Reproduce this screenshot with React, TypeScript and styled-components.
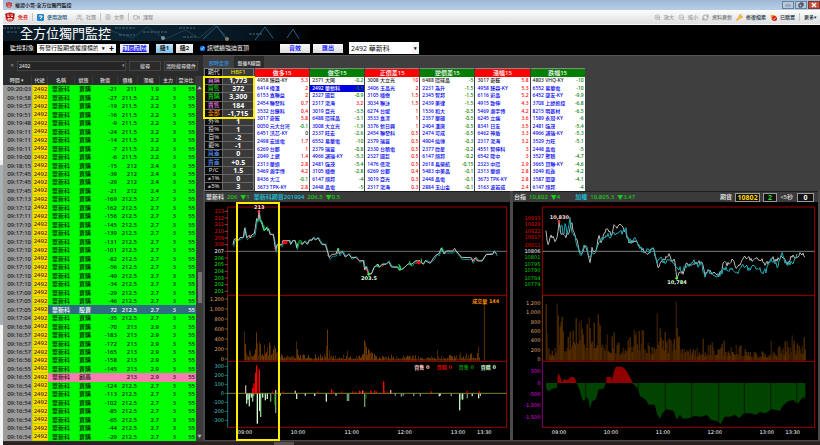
import React from 'react';
import styled, { createGlobalStyle } from 'styled-components';
import { ZoomIn, ZoomOut, RefreshCw, Wrench, Users, FileText, Video } from 'lucide-react';

const GlobalStyle = createGlobalStyle`
  * { box-sizing: border-box; }
  html, body, #root { height: 100%; }
  body {
    margin: 0;
    background: #000;
    font-family: "Noto Sans", "Noto Sans CJK TC", sans-serif;
    font-size: 6px;
    line-height: 1;
    overflow: hidden;
  }
  button, input, select { font-family: inherit; }
`;

/* ---------- shell ---------- */

const Page = styled.div`
  display: grid;
  grid-template-columns: 3px minmax(0, 1fr);
  grid-template-rows: minmax(0, 1fr);
  height: 100vh;
`;

const Edge = styled.div`
  background: linear-gradient(#fafafa 0 36%, #ececec 36% 37%, #a9b0b4 37% 73%, #f6f6f6 73%);
`;

const Win = styled.div`
  display: flex;
  flex-direction: column;
  min-width: 0;
  min-height: 0;
  background: #3f3f3f;
`;

const TitleBar = styled.header`
  flex: 0 0 10px;
  display: flex;
  align-items: center;
  gap: 3px;
  padding-left: 3px;
  font-size: 5px;
  font-weight: 500;
  color: #111;
  background: linear-gradient(#9fb9d6, #b7cee6);
`;

const WinButtons = styled.div`
  display: flex;
  align-self: stretch;
  gap: 1px;
  margin-left: auto;
  padding-top: 1px;
`;

const WinButton = styled.button<{ $close?: boolean }>`
  display: flex;
  align-items: center;
  justify-content: center;
  width: 12px;
  height: 8px;
  padding: 0;
  border: 1px solid ${(p) => (p.$close ? '#7c3a34' : '#6b8199')};
  background: ${(p) => (p.$close ? '#c8503f' : '#b5c9de')};
`;

const Toolbar = styled.nav`
  flex: 0 0 15px;
  display: flex;
  align-items: center;
  gap: 4px;
  padding: 0 3px 0 2px;
  background: linear-gradient(#fdfdfd, #dedede);
  border-bottom: 1px solid #f5f5f5;
`;

const Tool = styled.button<{ $color?: string }>`
  display: flex;
  align-items: center;
  gap: 3px;
  padding: 0;
  border: 0;
  background: none;
  font-size: 5px;
  font-weight: 500;
  line-height: 8px;
  white-space: nowrap;
  color: ${(p) => p.$color || '#999'};
`;

const Rule = styled.span<{ $clear?: boolean }>`
  width: 1px;
  height: 8px;
  background: ${(p) => (p.$clear ? 'transparent' : '#c4c4c4')};
`;

const Spacer = styled.span`
  flex: 1;
`;

const Banner = styled.div`
  position: relative;
  flex: 0 0 16px;
  overflow: hidden;
  background: #000;
`;

const BannerArt = styled.svg`
  position: absolute;
  inset: 0 auto auto 0;
  width: 310px;
  height: 16px;
`;

const BannerTitle = styled.h1`
  position: relative;
  margin: 0;
  padding: 1px 0 0 17px;
  font-size: 13px;
  line-height: 14px;
  font-weight: 400;
  color: #fff;
`;

const Controls = styled.div`
  flex: 0 0 14px;
  display: flex;
  align-items: center;
  padding: 0 0 0 7px;
  color: #fff;
  background: #000;
`;

const Label = styled.label<{ $ml?: number }>`
  display: flex;
  align-items: center;
  gap: 2px;
  margin-left: ${(p) => p.$ml || 0}px;
  font-size: 6px;
  white-space: nowrap;
`;

const ComboSelect = styled.select<{ $w: number; $big?: boolean; $ml: number }>`
  appearance: none;
  width: ${(p) => p.$w}px;
  height: ${(p) => (p.$big ? 12 : 9)}px;
  margin-left: ${(p) => p.$ml}px;
  padding: 0 2px;
  border: 0;
  border-radius: 0;
  font-size: ${(p) => (p.$big ? 7 : 6)}px;
  line-height: 1;
  color: #111;
  background: #fff;
`;

const Arrow = styled.span<{ $plus?: boolean }>`
  display: flex;
  align-items: center;
  justify-content: space-around;
  width: ${(p) => (p.$plus ? 16 : 7)}px;
  height: ${(p) => (p.$plus ? 9 : 12)}px;
  font-size: 5px;
  font-weight: 700;
  color: #111;
  background: #f4f4f4;
`;

const Push = styled.button<{ $w: number; $ml: number; $on?: boolean; $link?: boolean; $dark?: boolean }>`
  width: ${(p) => p.$w}px;
  height: 9px;
  margin-left: ${(p) => p.$ml}px;
  padding: 0;
  border: 0;
  font-size: 6px;
  line-height: 9px;
  font-weight: 700;
  white-space: nowrap;
  color: ${(p) => (p.$dark ? '#222' : '#1a1aff')};
  text-decoration: ${(p) => (p.$link ? 'underline' : 'none')};
  background: ${(p) => (p.$on ? 'linear-gradient(#c4e6fb, #7cc3ee)' : 'linear-gradient(#fafafa, #dcdcdc)')};
`;

const Check = styled.input`
  width: 5px;
  height: 5px;
  margin: 0;
`;

const Main = styled.main`
  flex: 1;
  min-height: 0;
  display: grid;
  grid-template-columns: 200fr 617fr;
  grid-template-rows: minmax(0, 1fr);
`;

const BottomStrip = styled.footer`
  flex: 0 0 4px;
  display: flex;
  background: #2a2120;
  border-top: 1px solid #3b302d;
`;

const StripThumb = styled.span`
  width: 20px;
  margin-left: 271px;
  background: #5b5552;
`;

/* ---------- signal list ---------- */

const ListPane = styled.section`
  display: flex;
  flex-direction: column;
  min-height: 0;
  background: #2b2b2b;
`;

const FilterBar = styled.form`
  flex: 0 0 21px;
  display: flex;
  align-items: center;
  gap: 3px;
  padding: 0 5px 0 7px;
  font-size: 5px;
  color: #999;
`;

const FilterBox = styled.div`
  flex: 1;
  min-width: 0;
  display: flex;
  align-items: center;
  border: 1px solid #444;
  height: 10px;
  background: #252525;
`;

const FilterInput = styled.input`
  flex: 1;
  min-width: 0;
  padding: 0 1px;
  border: 0;
  font-size: 5px;
  color: #eee;
  background: none;
`;

const DarkButton = styled.button<{ $w: number }>`
  flex: 0 0 ${(p) => p.$w}px;
  height: 10px;
  padding: 0;
  border: 1px solid #454545;
  font-size: 5px;
  line-height: 8px;
  white-space: nowrap;
  color: #eee;
  background: #2b2b2b;
`;

const ListBody = styled.div`
  flex: 1;
  min-height: 0;
  display: grid;
  grid-template-columns: minmax(0, 1fr) 7px;
  grid-template-rows: minmax(0, 1fr);
`;

const SignalTable = styled.table`
  display: flex;
  flex-direction: column;
  min-height: 0;
`;

const COLS = '29fr 16fr 27fr 18fr 25fr 20fr 22fr 17fr 19fr';

const SignalHead = styled.thead`
  flex: 0 0 9px;
  display: grid;

  tr { display: grid; grid-template-columns: ${COLS}; }
  th {
    padding: 0;
    font-size: 5px;
    line-height: 9px;
    font-weight: 500;
    white-space: nowrap;
    color: #d8d8d8;
    border-right: 1px solid #3a3a3a;
  }
`;

const SignalBody = styled.tbody`
  flex: 1;
  min-height: 0;
  display: grid;
  grid-auto-rows: minmax(0, 1fr);
`;

const TONES: Record<string, [string, string]> = {
  sell: ['#00ff00', '#001800'],
  hold: ['#2d6e80', '#fff'],
  high: ['#f77fb0', '#3a0a1c'],
};

const SignalRow = styled.tr<{ $tone: string }>`
  display: grid;
  grid-template-columns: ${COLS};
  grid-template-rows: minmax(0, 1fr);
  font-weight: 500;
  color: ${(p) => TONES[p.$tone][1]};
  background: ${(p) => TONES[p.$tone][0]};
`;

const Cell = styled.td<{ $kind: 'time' | 'code' | 'name' | 'num' }>`
  display: flex;
  align-items: center;
  min-height: 0;
  white-space: nowrap;
  line-height: 8px;
  padding: ${(p) => ({ time: '0 1px 0 0', code: '0', name: '0 0 0 4px', num: '0 1px 0 0' })[p.$kind]};
  justify-content: ${(p) => ({ time: 'flex-end', code: 'center', name: 'flex-start', num: 'flex-end' })[p.$kind]};
  ${(p) => p.$kind === 'time' && 'background: #9b9b9b; color: #1a1a1a;'}
  ${(p) => p.$kind === 'code' && 'background: #ffd800; color: #3b3000; border: solid #b8d800; border-width: 0 0 1px 1px;'}
`;

const ScrollTrack = styled.div`
  display: flex;
  flex-direction: column;
  align-items: center;
  padding: 11px 0 2px;
  font-size: 4px;
  color: #bbb;
  background: #3b3b3b;
`;

const ScrollGap = styled.span<{ $grow: number }>`
  flex: ${(p) => p.$grow};
`;

const ScrollThumb = styled.span`
  width: 4px;
  height: 31px;
  background: #707070;
`;

/* ---------- market tables ---------- */

const RightPane = styled.section`
  display: flex;
  flex-direction: column;
  min-width: 0;
  min-height: 0;
  border-top: 1px solid #555;
  background: #3f3f3f;
`;

const Tabs = styled.div`
  flex: 0 0 12px;
  display: flex;
  align-items: stretch;
  padding-left: 1px;
`;

const Tab = styled.button<{ $active?: boolean }>`
  width: 30px;
  padding: 0;
  border: 0;
  font-size: 5px;
  font-weight: 500;
  white-space: nowrap;
  color: ${(p) => (p.$active ? '#2f8fe0' : '#ddd')};
  background: ${(p) => (p.$active ? '#3f3f3f' : '#2b2b2b')};
`;

const Market = styled.div`
  position: relative;
  flex: 0 0 123px;
  display: grid;
  grid-template-columns: 50fr repeat(6, 54fr) 234fr;
  grid-template-rows: minmax(0, 1fr);
  column-gap: 1px;
  padding-left: 1px;
`;

const Summary = styled.table`
  display: grid;
  grid-template-rows: minmax(0, 1fr);
  min-height: 0;
  border: 1px solid #777;
  background: #666;
`;

const SummaryBody = styled.tbody`
  display: grid;
  min-height: 0;
  grid-auto-rows: minmax(0, 1fr);
  row-gap: 1px;
`;

const SummaryRow = styled.tr`
  display: grid;
  grid-template-columns: 18fr 31fr;
  grid-template-rows: minmax(0, 1fr);
  column-gap: 1px;
`;

const SummaryKey = styled.th<{ $c: string }>`
  display: flex;
  align-items: center;
  justify-content: center;
  min-height: 0;
  padding: 0;
  font-size: 6px;
  font-weight: 400;
  line-height: 7px;
  white-space: nowrap;
  color: ${(p) => p.$c};
  background: #0b0b0b;
`;

const SummaryValue = styled.td<{ $head?: boolean }>`
  display: flex;
  align-items: center;
  justify-content: center;
  min-height: 0;
  padding: 0;
  font-size: ${(p) => (p.$head ? 6 : 7)}px;
  font-weight: ${(p) => (p.$head ? 400 : 700)};
  line-height: 7px;
  color: ${(p) => (p.$head ? '#f1e500' : '#fff')};
  background: #3a3a3a;
`;

const SummaryMark = styled.span`
  position: absolute;
  top: 8px;
  left: 0;
  width: 52px;
  height: 43px;
  border: 2px solid #ffee00;
`;

const RankTable = styled.table`
  display: flex;
  flex-direction: column;
  min-height: 0;
  background: #fff;
`;

const RankHead = styled.caption<{ $c: string }>`
  flex: 0 0 9px;
  border-top: 1px solid #888;
  font-size: 6px;
  line-height: 8px;
  font-weight: 500;
  text-align: center;
  color: #fff;
  background: ${(p) => p.$c};
`;

const RankBody = styled.tbody`
  flex: 1;
  min-height: 0;
  display: grid;
  grid-auto-rows: minmax(0, 1fr);
`;

const RankRow = styled.tr<{ $first?: boolean; $selected?: boolean }>`
  display: flex;
  align-items: center;
  justify-content: space-between;
  padding: 0 1px 0 2px;
  color: ${(p) => (p.$selected ? '#fff' : p.$first ? '#222' : '#0000f0')};
  background: ${(p) => (p.$selected ? '#0000e0' : 'transparent')};
`;

const RankCell = styled.td<{ $c?: string }>`
  padding: 0;
  font-size: 5px;
  line-height: 7px;
  font-weight: 500;
  white-space: nowrap;
  color: ${(p) => p.$c || 'inherit'};
`;

/* ---------- charts ---------- */

const Charts = styled.div`
  position: relative;
  flex: 1;
  min-height: 0;
  display: grid;
  grid-template-columns: minmax(0, 1fr) minmax(0, 1fr);
  grid-template-rows: minmax(0, 1fr);
  column-gap: 3px;
  padding: 0 2px 1px;
  background: #4a4a4a;
`;

const Panel = styled.article`
  display: flex;
  flex-direction: column;
  min-width: 0;
  min-height: 0;
  border-top: 1px solid #1e1e1e;
  background: #3a3a3a;
`;

const PanelHead = styled.div`
  flex: 0 0 10px;
  display: flex;
  align-items: center;
  gap: 3px;
  padding: 0 4px 0 1px;
  font-weight: 500;
  white-space: nowrap;
`;

const Quote = styled.span<{ $c: string; $gap?: number }>`
  margin-right: ${(p) => p.$gap || 0}px;
  color: ${(p) => p.$c};
`;

const Box = styled.span<{ $c: string; $w: number }>`
  width: ${(p) => p.$w}px;
  height: 9px;
  border: 1px solid #999;
  font-size: 7px;
  line-height: 7px;
  font-weight: 700;
  text-align: center;
  color: ${(p) => p.$c};
  background: #111;
`;

const Plot = styled.svg`
  flex: 1;
  min-height: 0;
  width: 100%;
  background: #000;
  font-family: "DejaVu Sans", "Noto Sans CJK TC", sans-serif;
`;

const ChartMark = styled.span`
  position: absolute;
  top: 11px;
  bottom: 0;
  left: 33px;
  width: 44px;
  border: 2px solid #ffee00;
`;

/* ---------- data ---------- */

type Signal = [string, string, string, string, string, string?];

const SIGNALS: Signal[] = [
  ['09:20:03', '賣購', '-21', '211', '1.9'],
  ['09:19:58', '賣購', '-27', '211.5', '2.2'],
  ['09:19:57', '賣購', '-19', '211.5', '2.2'],
  ['09:19:51', '賣購', '-16', '211.5', '2.2'],
  ['09:19:48', '賣購', '-9', '211.5', '2.2'],
  ['09:19:11', '賣購', '-24', '211.5', '2.2'],
  ['09:19:11', '賣購', '-14', '211.5', '2.2'],
  ['09:19:11', '賣購', '-7', '211.5', '2.2'],
  ['09:19:00', '賣購', '-6', '211.5', '2.2'],
  ['09:18:15', '賣購', '-15', '212', '2.4'],
  ['09:17:45', '賣購', '-39', '212', '2.4'],
  ['09:17:45', '賣購', '-29', '212', '2.4'],
  ['09:17:45', '賣購', '-21', '212', '2.4'],
  ['09:17:13', '賣購', '-169', '212.5', '2.7'],
  ['09:17:12', '賣購', '-162', '212.5', '2.7'],
  ['09:17:11', '賣購', '-156', '212.5', '2.7'],
  ['09:17:10', '賣購', '-145', '212.5', '2.7'],
  ['09:17:10', '賣購', '-139', '212.5', '2.7'],
  ['09:17:10', '賣購', '-131', '212.5', '2.7'],
  ['09:17:10', '賣購', '-101', '212.5', '2.7'],
  ['09:17:10', '賣購', '-82', '212.5', '2.7'],
  ['09:17:10', '賣購', '-56', '212.5', '2.7'],
  ['09:17:10', '賣購', '-49', '212.5', '2.7'],
  ['09:17:10', '賣購', '-34', '212.5', '2.7'],
  ['09:17:09', '賣購', '-29', '212.5', '2.7'],
  ['09:17:05', '賣購', '-46', '212.5', '2.7'],
  ['09:17:05', '股賣', '72', '212.5', '2.7', 'hold'],
  ['09:17:04', '賣購', '-35', '212.5', '2.7'],
  ['09:16:59', '賣購', '-70', '213', '2.9'],
  ['09:16:57', '賣購', '-183', '213', '2.9'],
  ['09:16:57', '賣購', '-172', '213', '2.9'],
  ['09:16:57', '賣購', '-165', '213', '2.9'],
  ['09:16:56', '賣購', '-158', '213', '2.9'],
  ['09:16:55', '賣購', '-145', '213', '2.9'],
  ['09:16:55', '創高', '', '213', '2.9', 'high'],
  ['09:16:54', '賣購', '-124', '212.5', '2.7'],
  ['09:16:54', '賣購', '-113', '212.5', '2.7'],
  ['09:16:54', '賣購', '-102', '212.5', '2.7'],
  ['09:16:54', '賣購', '-85', '212.5', '2.7'],
  ['09:16:54', '賣購', '-65', '212.5', '2.7'],
  ['09:16:54', '賣購', '-44', '212.5', '2.7'],
  ['09:16:54', '賣購', '-29', '212.5', '2.7'],
];

const SUMMARY: [string, string, string][] = [
  ['買購', '1,773', '#ff8cff'],
  ['買售', '372', '#18e018'],
  ['賣購', '3,300', '#18e018'],
  ['賣售', '184', '#ff8cff'],
  ['全部', '-1,715', '#ff9000'],
  ['外%', '1', '#ddd'],
  ['投%', '1', '#ddd'],
  ['自%', '-2', '#ddd'],
  ['避%', '-1', '#ddd'],
  ['買差', '0', '#5a9cff'],
  ['賣差', '+0.5', '#5a9cff'],
  ['P/C', '1.5', '#ddd'],
  ['±1%', '0', '#ddd'],
  ['±5%', '3', '#ddd'],
];

const RED = '#ff0000';
const GREEN = '#007f00';

const RANKS: { title: string; color: string; rows: string }[] = [
  { title: '做多15', color: RED, rows: '4958 臻鼎-KY|5.3,6414 樺漢|2,6153 嘉聯益|2,2454 聯發科|0.7,3532 台勝科|0.4,3017 奇鋐|5.8,0050 元大台灣|-0.1,6451 訊芯-KY|0,2498 宏達電|1.7,6269 台郡|1,2049 上銀|1.4,2313 華通|2.8,5469 瀚宇博|4.2,8436 大江|-0.1,3673 TPK-KY|2.8' },
  { title: '做空15', color: GREEN, rows: '2371 大同|-0.2,2492 華新科|-0.5,2327 國巨|-0.9,2317 鴻海|3.2,3019 亞光|-3.5,6488 環球晶|-3.1,3008 大立光|-1.9,2337 旺宏|-2.6,6552 易華電|-10,2379 瑞昱|-0.8,4966 譜瑞-KY|-5.3,2481 強茂|-5.4,3105 穩懋|-2.8,6147 頎邦|-4,2448 晶電|-5' },
  { title: '正價差15', color: RED, rows: '3008 大立光|10,3406 玉晶光|2,3105 穩懋|1.5,3034 聯詠|1.5,6274 台燿|1,3533 嘉澤|1,3376 新日興|1,2454 聯發科|0.5,2379 瑞昱|0.5,2330 台積電|0.5,2327 國巨|0.5,1476 儒鴻|0.5,6269 台郡|0.4,3019 亞光|0.3,2317 鴻海|0.3' },
  { title: '逆價差15', color: GREEN, rows: '6488 環球晶|-5,2231 為升|-1.5,2345 智邦|-1.5,2439 美律|-1.5,1536 和大|-0.5,2357 華碩|-0.5,2404 漢唐|-0.5,2474 可成|-0.5,4904 遠傳|-0.3,2377 微星|-0.2,6147 頎邦|-0.2,2618 長榮航|-0.15,5483 中美晶|-0.1,2448 晶電|-0.1,2884 玉山金|-0.1' },
  { title: '漲幅15', color: RED, rows: '3017 奇鋐|5.8,4958 臻鼎-KY|5.3,6116 彩晶|5.2,4915 致伸|4.3,5469 瀚宇博|4.2,6245 立端|3.6,8341 日友|3.5,6462 神盾|3.3,2317 鴻海|3.2,4551 智伸科|3,6542 隆中|3,2323 中環|2.9,2313 華通|2.8,3673 TPK-KY|2.8,3163 波若威|2.4' },
  { title: '跌幅15', color: GREEN, rows: '4803 VHQ-KY|-10,6552 易華電|-10,6452 康友-KY|-9.9,3708 上緯投控|-6.8,8215 明基材|-6.5,1589 永冠-KY|-6,2481 強茂|-5.4,4966 譜瑞-KY|-5.3,3529 力旺|-5.1,2448 晶電|-5,3527 聚積|-4.7,3665 貿聯-KY|-4.6,3049 和鑫|-4.2,3587 閎康|-4.1,6147 頎邦|-4' },
];

/* ---------- chart geometry ---------- */

const noise = (i: number) => {
  const v = Math.sin(i * 127.1 + 11.7) * 43758.5453;
  return v - Math.floor(v);
};

type Pt = [number, number];

const lerp = (pts: Pt[], x: number) => {
  for (let i = 1; i < pts.length; i++) {
    if (x <= pts[i][0]) {
      const [x0, y0] = pts[i - 1];
      const [x1, y1] = pts[i];
      return y0 + ((y1 - y0) * (x - x0)) / (x1 - x0 || 1);
    }
  }
  return pts[pts.length - 1][1];
};

const toPoints = (pts: Pt[]) => pts.map((p) => p.join(',')).join(' ');

const jitter = (pts: Pt[], step: number, amp: number, seed: number): Pt[] => {
  const out: Pt[] = [];
  const end = pts[pts.length - 1][0];
  for (let x = pts[0][0]; x <= end; x += step) out.push([x, Math.round(lerp(pts, x) + (noise(x + seed) - 0.5) * amp)]);
  return out;
};

const bars = (env: Pt[], spikes: Pt[], base: number, step: number, seed: number) => {
  const out: { x: number; h: number; light: boolean }[] = [];
  const end = env[env.length - 1][0];
  for (let x = env[0][0]; x <= end; x += step) {
    const n = noise(x + seed);
    let h = lerp(env, x) * (0.5 + n * n * 1.3);
    spikes.forEach(([sx, sy]) => {
      if (Math.abs(sx - x) <= step / 2) h = base - sy;
    });
    out.push({ x, h: Math.round(h), light: noise(x * 3 + seed) > 0.45 });
  }
  return out;
};

const PRICE: Pt[] = [[93, 170], [97, 153], [104, 153], [108, 158], [114, 149], [124, 148], [128, 120], [134, 149], [142, 142], [144, 150], [150, 140], [157, 137], [160, 118], [164, 92], [168, 96], [171, 70], [174, 96], [180, 108], [184, 122], [188, 127], [194, 118], [197, 128], [200, 122], [204, 139], [214, 139], [218, 168], [221, 187], [225, 170], [240, 170], [242, 158], [262, 158], [266, 169], [272, 158], [280, 158], [284, 179], [290, 160], [296, 160], [300, 170], [308, 160], [316, 169], [322, 156], [330, 157], [334, 149], [340, 156], [348, 150], [354, 160], [360, 170], [370, 170], [376, 189], [382, 208], [390, 199], [402, 198], [408, 182], [412, 198], [420, 190], [430, 207], [440, 199], [448, 208], [462, 208], [472, 218], [484, 218], [488, 246], [492, 236], [500, 259], [508, 258], [516, 238], [528, 228], [532, 238], [540, 229], [552, 229], [560, 221], [568, 237], [586, 238], [592, 247], [600, 244], [608, 238], [618, 228], [630, 228], [640, 219], [654, 218], [664, 229], [670, 218], [684, 226], [696, 208], [704, 200], [710, 198], [718, 180], [726, 198], [732, 189], [752, 189], [758, 181], [762, 189], [772, 199], [778, 208], [808, 209], [812, 220], [820, 209], [828, 219], [840, 219], [852, 200], [872, 199], [876, 190], [884, 198]];
const PRICE_ALT: Pt[] = PRICE.map(([x, y], i) => [x + 2, y + (noise(i) > 0.6 ? 6 : -2)] as Pt);

const LEFT_VOL = bars(
  [[127, 60], [140, 18], [160, 30], [180, 28], [230, 24], [240, 14], [300, 12], [480, 9], [490, 28], [520, 11], [700, 9], [760, 10], [833, 14]],
  [[127, 432], [130, 470], [163, 435], [166, 468], [172, 462], [196, 480], [202, 465], [217, 475], [283, 462], [286, 486], [376, 427], [373, 476], [382, 488], [436, 490], [487, 459], [490, 465], [493, 478], [706, 488], [775, 495], [829, 477], [826, 497]],
  520, 3, 5,
);

const RIGHT_VOL = bars(
  [[108, 50], [120, 20], [140, 36], [145, 90], [160, 50], [200, 75], [240, 75], [270, 60], [300, 45], [330, 32], [390, 60], [430, 30], [442, 90], [470, 45], [505, 55], [530, 25], [580, 22], [610, 34], [650, 26], [690, 30], [730, 18], [790, 18], [830, 34], [886, 42]],
  [[108, 351], [111, 440], [141, 348], [144, 384], [156, 388], [207, 405], [213, 398], [237, 390], [264, 381], [267, 408], [312, 435], [441, 378], [450, 423], [498, 342], [501, 422], [579, 454], [606, 466], [642, 460], [690, 476], [783, 460], [825, 462], [846, 444], [882, 450]],
  520, 3, 40,
);

const FLOW: [number, number, string][] = [
  [131, -24, '#c9a0a0'], [134, 30, '#bfeebf'], [138, 18, '#bfeebf'], [142, 38, '#bfeebf'], [148, 12, '#bfeebf'], [152, -16, '#f00'], [156, -30, '#f00'], [152, 24, '#8fc98f'],
  [161, -62, '#f00'], [164, -84, '#f00'], [166, 90, '#d8ffd8'], [172, -72, '#f00'], [173, 52, '#d8ffd8'], [176, 70, '#8fc98f'], [182, 12, '#bfeebf'], [190, 20, '#bfeebf'], [196, 16, '#bfeebf'],
  [206, 24, '#6a9a6a'], [218, 34, '#007000'], [221, 58, '#6a9a6a'], [221, -10, '#e6a0a0'], [284, 16, '#bfeebf'], [280, -8, '#e6a0a0'], [310, 6, '#bfeebf'], [338, 7, '#bfeebf'], [373, 24, '#bfeebf'],
  [389, -12, '#f00'], [402, 6, '#bfeebf'], [436, 22, '#6a9a6a'], [440, 22, '#6a9a6a'], [488, 40, '#6a9a6a'], [492, 16, '#007000'], [472, -8, '#f00'], [482, -8, '#e6a0a0'], [506, -8, '#f00'], [518, -8, '#f00'],
  [545, -36, '#f00'], [566, -10, '#e6a0a0'], [598, 9, '#6a9a6a'], [655, 8, '#6a9a6a'], [688, -6, '#f00'], [712, 8, '#bfeebf'], [773, 50, '#bfeebf'], [777, 18, '#6a9a6a'], [782, 18, '#bfeebf'], [796, 14, '#6a9a6a'], [796, -8, '#b00'], [810, 8, '#6a9a6a'], [830, 14, '#bfeebf'], [832, -6, '#f00'],
];

const FUTURES: Pt[] = [[108, 128], [113, 166], [119, 158], [124, 142], [130, 148], [134, 166], [140, 160], [147, 100], [153, 143], [162, 138], [168, 145], [175, 132], [181, 124], [184, 100], [190, 128], [197, 146], [205, 168], [211, 200], [218, 190], [224, 168], [231, 184], [239, 228], [246, 184], [252, 196], [260, 180], [266, 140], [273, 162], [280, 146], [290, 118], [297, 128], [304, 142], [311, 112], [320, 118], [328, 110], [338, 120], [346, 132], [354, 156], [362, 164], [372, 156], [384, 170], [398, 184], [408, 200], [418, 196], [426, 178], [434, 196], [444, 238], [452, 224], [462, 216], [470, 204], [478, 196], [486, 216], [494, 212], [500, 270], [508, 248], [518, 256], [528, 230], [538, 232], [550, 226], [562, 226], [576, 220], [584, 262], [594, 250], [606, 254], [616, 252], [626, 262], [636, 240], [642, 218], [650, 230], [660, 226], [668, 216], [678, 240], [690, 228], [700, 210], [712, 208], [720, 212], [728, 220], [742, 208], [756, 216], [766, 228], [778, 222], [786, 210], [800, 218], [812, 204], [820, 212], [832, 224], [846, 206], [858, 208], [870, 200], [878, 196], [885, 204]];
const SPOT: Pt[] = [[150, 134], [155, 100], [160, 146], [167, 100], [172, 140], [181, 90], [186, 134], [193, 138], [200, 164], [207, 190], [214, 200], [222, 168], [230, 180], [240, 214], [248, 196], [258, 192], [266, 160], [276, 154], [290, 140], [300, 144], [312, 134], [324, 140], [336, 132], [348, 126], [356, 156], [368, 160], [378, 152], [390, 176], [402, 198], [412, 184], [424, 190], [430, 176], [440, 220], [452, 214], [464, 222], [478, 208], [490, 224], [502, 236], [514, 246], [526, 240], [538, 230], [550, 218], [562, 232], [574, 226], [584, 270], [596, 248], [608, 256], [620, 262], [632, 256], [644, 240], [656, 250], [668, 246], [682, 254], [694, 236], [706, 232], [718, 246], [730, 234], [744, 236], [756, 252], [768, 248], [778, 220], [790, 216], [802, 234], [816, 200], [826, 220], [838, 230], [850, 222], [862, 194]];
const RED_AREA_A: Pt[] = [[142, 585], [142, 572], [145, 556], [150, 564], [156, 582], [162, 574], [174, 576], [184, 566], [194, 568], [200, 585]];
const RED_AREA_B: Pt[] = [[288, 585], [290, 566], [304, 568], [306, 578], [312, 550], [318, 536], [336, 536], [346, 544], [356, 560], [366, 580], [370, 585]];
const GREEN_AREA: Pt[] = [[108, 585], [108, 600], [115, 610], [126, 604], [132, 600], [141, 600], [142, 585], [200, 585], [208, 602], [216, 632], [222, 640], [228, 626], [236, 636], [240, 662], [246, 640], [258, 634], [266, 604], [280, 602], [288, 586], [366, 585], [376, 594], [384, 602], [390, 624], [408, 636], [416, 650], [434, 650], [442, 680], [450, 692], [456, 678], [468, 664], [490, 668], [500, 694], [510, 680], [518, 692], [540, 690], [552, 684], [576, 686], [590, 680], [604, 696], [624, 700], [632, 708], [644, 686], [660, 686], [674, 680], [688, 690], [702, 676], [720, 676], [738, 680], [750, 672], [768, 676], [784, 664], [810, 668], [820, 652], [834, 640], [850, 636], [862, 648], [876, 630], [884, 628], [886, 640], [886, 585]];

const AXIS_TIMES = ['09:00', '10:00', '11:00', '12:00', '13:00', '13:30'];

const TickLabels = ({ items, right }: { items: [string, number, string][]; right: number }) => (
  <g fontSize="15" textAnchor="end">
    {items.map(([t, y, c]) => (
      <text key={t + y} x={right} y={y + 5} fill={c}>
        {t}
      </text>
    ))}
  </g>
);

const Frame = ({ left }: { left: number }) => (
  <g stroke="#a00000" strokeWidth="3" fill="none">
    <path d={`M${left} 57H914V718H${left}M${left} 322H914M${left} 520H914M${left} 57V322`} />
    <path d={`M${left} 322V520`} stroke="#7a4000" />
  </g>
);

const StockChart = () => (
  <Plot viewBox="9 45 915 708" role="img" aria-label="華新科 走勢圖">
    <Frame left={77} />
    <path d="M77 520V718" stroke="#008080" strokeWidth="3" />
    <TickLabels
      right={66}
      items={[
        ...[213, 212, 211, 210, 209, 208].map((v, i) => [String(v), 70 + i * 20, '#f00000'] as [string, number, string]),
        ['207', 190, '#fff'],
        ...[206, 205, 204, 203, 202, 201].map((v, i) => [String(v), 210 + i * 20, '#00e800'] as [string, number, string]),
        ...['1,200', '1,000', '800', '600', '400', '200', '0'].map((v, i) => [v, 333 + i * 30, '#e0a870'] as [string, number, string]),
        ...['300', '200', '100', '0', '-100', '-200', '-300'].map((v, i) => [v, 535 + i * 27, '#50c0c0'] as [string, number, string]),
      ]}
    />
    <path d={Array.from({ length: 13 }, (_, i) => `M68 ${70 + i * 20}H77`).join('') + Array.from({ length: 7 }, (_, i) => `M68 ${333 + i * 30}H77M68 ${535 + i * 27}H77`).join('')} stroke="#888" strokeWidth="2" />
    <path d="M77 190H914" stroke="#707070" strokeWidth="3" />
    <polyline points={toPoints(PRICE_ALT)} fill="none" stroke="#008c8c" strokeWidth="3" />
    <polyline points={toPoints(PRICE)} fill="none" stroke="#c0c0c0" strokeWidth="3" />
    <g strokeWidth="3" fill="none">
      <path d="M142 150l3-9M171 70v12M219 180l3 8M376 200l6 8M408 186v10M466 210l8 10M492 240l8 18M540 236l6-6M640 226l14-4M810 212l6 8M820 212l6 8" stroke="#ff5050" />
      <path d="M164 92l4 8M178 98l4 12M186 112v16M194 120l4 10M284 168l4 8M408 180v8M524 230l6 8M590 228l8 18M594 246v-14M622 220l6 14M658 212v10M718 182l4 10" stroke="#00ff40" />
    </g>
    <path d="M242 158h14v10h-14zM646 220h10v9h-10z" fill="#f00" />
    <path d="M288 158h10v10h-10z" fill="#007000" />
    <circle cx="171" cy="70" r="4" fill="#ff4040" />
    <circle cx="500" cy="259" r="4" fill="#40ff40" />
    <g fontSize="15" fontWeight="700" textAnchor="middle">
      <text x="172" y="62" fill="#ffd8d8">213</text>
      <text x="501" y="277" fill="#d8ffd8">203.5</text>
    </g>
    {LEFT_VOL.map((b) => (
      <rect key={b.x} x={b.x - 1} y={518 - b.h} width="3" height={b.h} fill={b.light ? '#6b3600' : '#4a2500'} />
    ))}
    <path d="M847 341V518" stroke="#5c2f00" strokeWidth="3" />
    <text x="892" y="345" fontSize="15" fontWeight="700" textAnchor="end" fill="#ff8c00">成交量 144</text>
    <path d="M77 616H914" stroke="#808030" strokeWidth="3" />
    {FLOW.map(([x, h, c], i) => (
      <rect key={i} x={x - 2} y={h < 0 ? 616 + h : 617} width="4" height={Math.abs(h)} fill={c} />
    ))}
    {Array.from({ length: 90 }, (_, i) => 130 + i * 8).map((x) => {
      const n = noise(x);
      return n > 0.5 && (x < 260 || n > 0.8) ? (
        <rect key={x} x={x} y={n > 0.75 && x < 560 ? 610 : 617} width="3" height={3 + Math.round(n * 4)} fill={n > 0.75 && x < 560 ? '#e00000' : '#9fd89f'} />
      ) : null;
    })}
    <g fontSize="15" fontWeight="700">
      <text x="637" y="543" fill="#ffc8c8">賣售 0</text>
      <text x="704" y="543" fill="#d80000">買購 0</text>
      <text x="770" y="543" fill="#008a00">買售 0</text>
      <text x="836" y="543" fill="#d0ffd0">賣購 0</text>
    </g>
    <g fontSize="15" textAnchor="middle" fill="#fff">
      {AXIS_TIMES.map((t, i) => (
        <text key={t} x={[129, 288, 449, 608, 768, 847][i]} y="737">{t}</text>
      ))}
    </g>
  </Plot>
);

const IndexChart = () => (
  <Plot viewBox="9 45 915 708" role="img" aria-label="台指 走勢圖">
    <Frame left={97} />
    <path d="M97 520V718" stroke="#800080" strokeWidth="3" />
    <TickLabels
      right={91}
      items={[
        ['10833', 90, '#e00000'], ['10828', 108, '#e00000'], ['10822', 131, '#e00000'], ['10817', 149, '#e00000'], ['10811', 171, '#e00000'],
        ['10806', 190, '#fff'],
        ['10801', 208, '#00d800'], ['10795', 230, '#00d800'], ['10790', 248, '#00d800'], ['10784', 270, '#00d800'], ['10779', 288, '#00d800'],
        ...['1,200', '1,000', '800', '600', '400', '200', '0'].map((v, i) => [v, 346 + i * 28, '#e0a870'] as [string, number, string]),
        ...['500', '0', '-500', '-1,000', '-1,500'].map((v, i) => [v, 551 + i * 34, '#e000e0'] as [string, number, string]),
      ]}
    />
    <path d="M97 190H914" stroke="#808080" strokeWidth="3" />
    <polyline points={toPoints(jitter(FUTURES, 3, 12, 3))} fill="none" stroke="#b8b8b8" strokeWidth="3" />
    <polyline points={toPoints(jitter(SPOT, 3, 16, 9))} fill="none" stroke="#20a8b0" strokeWidth="3" />
    <circle cx="147" cy="100" r="4" fill="#ff3030" />
    <circle cx="500" cy="271" r="4" fill="#40ff40" />
    <g fontSize="15" fontWeight="700" textAnchor="middle">
      <text x="148" y="92" fill="#ffd8d8">10,830</text>
      <text x="501" y="288" fill="#d8ffd8">10,784</text>
    </g>
    {RIGHT_VOL.map((b) => (
      <rect key={b.x} x={b.x - 1} y={518 - b.h} width="3" height={b.h} fill={b.light ? '#6b3600' : '#4a2500'} />
    ))}
    <polygon points={toPoints(RED_AREA_A)} fill="#900000" />
    <polygon points={toPoints(RED_AREA_B)} fill="#900000" />
    <polygon points={toPoints(GREEN_AREA)} fill="#004400" />
    <path d="M227 585v50M385 585v20M466 585v80M545 585v102M626 585v115M703 585v90M782 585v80M860 585v60" stroke="#001c00" strokeWidth="3" />
    <g fontSize="15" textAnchor="middle" fill="#fff">
      {AXIS_TIMES.map((t, i) => (
        <text key={t} x={[147, 303, 459, 614, 770, 848][i]} y="737">{t}</text>
      ))}
    </g>
  </Plot>
);

/* ---------- page ---------- */

const PigIcon = ({ size }: { size: number }) => (
  <svg width={size} height={size} viewBox="0 0 20 20" aria-hidden="true">
    <circle cx="10" cy="10" r="9" fill="#c41414" />
    <circle cx="3" cy="5" r="2.5" fill="#a01010" />
    <circle cx="17" cy="5" r="2.5" fill="#a01010" />
    <path d="M4 6h5M11 6h5M5 9h4M12 9h4M6 13h8v3H6z" stroke="#fff" strokeWidth="1.6" fill="none" />
  </svg>
);

const InfoIcon = () => (
  <svg width="7" height="7" viewBox="0 0 14 14" aria-hidden="true">
    <rect width="14" height="14" rx="2" fill="#2588c8" />
    <path d="M4 4h6v2L7 8v2" stroke="#fff" strokeWidth="2" fill="none" />
  </svg>
);

const BoughtIcon = () => (
  <svg width="7" height="7" viewBox="0 0 14 14" aria-hidden="true">
    <path d="M1 2h9v10H3z" fill="#f3a01c" />
    <circle cx="9" cy="9" r="5" fill="#d81818" />
    <path d="M6 9l2 2 4-4" stroke="#fff" strokeWidth="1.6" fill="none" />
  </svg>
);

const changeColor = (v: string) => (v.startsWith('-') ? '#008000' : v === '0' ? '#222' : '#ff0000');

export default function App() {
  return (
    <>
      <GlobalStyle />
      <Page>
        <Edge />
        <Win>
          <TitleBar>
            <PigIcon size={6} />
            <span>權證小哥-全方位獨門監控</span>
            <WinButtons>
              <WinButton aria-label="最小化">
                <svg width="6" height="4" viewBox="0 0 6 4"><path d="M1 2h4v1H1z" fill="#fff" stroke="#445" strokeWidth=".5" /></svg>
              </WinButton>
              <WinButton aria-label="還原">
                <svg width="6" height="6" viewBox="0 0 6 6"><path d="M2 1h3v3M1 2h3v3H1z" fill="none" stroke="#334" /></svg>
              </WinButton>
              <WinButton aria-label="關閉" $close>
                <svg width="6" height="6" viewBox="0 0 6 6"><path d="M1 1l4 4M5 1L1 5" stroke="#fff" strokeWidth="1.4" /></svg>
              </WinButton>
            </WinButtons>
          </TitleBar>

          <Toolbar>
            <Tool $color="#e01010"><PigIcon size={10} />免費</Tool>
            <Rule />
            <Tool $color="#235a80"><InfoIcon />使用說明</Tool>
            <Rule $clear />
            <Tool><Users size={7} />社團</Tool>
            <Rule />
            <Tool><FileText size={6} />文章</Tool>
            <Rule />
            <Tool><Video size={7} />課程</Tool>
            <Spacer />
            <Tool><ZoomIn size={7} />放大</Tool>
            <Tool><ZoomOut size={7} />縮小</Tool>
            <Tool $color="#777"><RefreshCw size={7} />資料更新</Tool>
            <Tool $color="#234"><Wrench size={7} color="#e09010" fill="#ffc040" />修復檔案</Tool>
            <Tool $color="#234"><BoughtIcon />已購置</Tool>
            <Rule />
            <Tool $color="#234">更多▾</Tool>
          </Toolbar>

          <Banner>
            <BannerArt viewBox="0 0 310 16" aria-hidden="true">
              <defs>
                <linearGradient id="glow" x1="0" x2="1" y1="0" y2="0">
                  <stop offset="0" stopColor="#0b1a24" />
                  <stop offset=".4" stopColor="#0c2432" />
                  <stop offset=".75" stopColor="#071824" />
                  <stop offset="1" stopColor="#000" />
                </linearGradient>
              </defs>
              <rect width="310" height="16" fill="url(#glow)" />
              <path d="M108 6l22 7 14-11 18 12 20-9 14 8 16-13 14 14" stroke="#1c405a" fill="none" />
              <path d="M200 14L214 1l9 13M252 15l10-13 8 11M284 13l6-9 6 10" stroke="#285f80" fill="none" />
              <path d="M0 3h18M4 7h10M112 3h20M116 10h16M140 7h24M176 3h16M180 12h14M246 9h14" stroke="#47697c" strokeDasharray="3 1 2 1" />
              <circle cx="160" cy="13" r="2" fill="#7b93a0" />
              <circle cx="224" cy="14" r="2" fill="#8a7a60" />
            </BannerArt>
            <BannerTitle>全方位獨門監控</BannerTitle>
          </Banner>

          <Controls>
            <Label htmlFor="target">監控對象</Label>
            <ComboSelect id="target" $w={63} $ml={3}>
              <option>有發行股期或權證標的</option>
            </ComboSelect>
            <Arrow $plus><span>▾</span><span>✚</span></Arrow>
            <Push $w={29} $ml={4} $link>訂閱訊號</Push>
            <Push $w={17} $ml={7} $on $dark>級1</Push>
            <Push $w={17} $ml={3} $dark>級2</Push>
            <Label $ml={7}><Check type="checkbox" defaultChecked />訊號續強迫置頂</Label>
            <Push $w={30} $ml={31}>音效</Push>
            <Push $w={30} $ml={3}>匯出</Push>
            <ComboSelect aria-label="股票" $w={63} $ml={6} $big>
              <option>2492 華新科</option>
            </ComboSelect>
            <Arrow><span>▾</span></Arrow>
          </Controls>

          <Main>
            <ListPane>
              <FilterBar onSubmit={(e) => e.preventDefault()}>
                <span>✕</span>
                <FilterBox>
                  <FilterInput aria-label="代號" defaultValue="2492" />
                  <span>▾</span>
                </FilterBox>
                <DarkButton $w={32} type="submit">搜尋</DarkButton>
                <DarkButton $w={34} type="button">清除搜尋條件</DarkButton>
              </FilterBar>
              <ListBody>
                <SignalTable>
                  <SignalHead>
                    <tr>
                      {['時間 ▾', '代號', '名稱', '狀態', '數值', '價格', '漲幅', '主力', '當沖比'].map((h) => (
                        <th key={h}>{h}</th>
                      ))}
                    </tr>
                  </SignalHead>
                  <SignalBody>
                    {SIGNALS.map(([time, state, amount, price, pct, tone], i) => (
                      <SignalRow key={i} $tone={tone || 'sell'}>
                        <Cell $kind="time">{time}</Cell>
                        <Cell $kind="code">2492</Cell>
                        <Cell $kind="name">華新科</Cell>
                        <Cell $kind="name">{state}</Cell>
                        <Cell $kind="num">{amount}</Cell>
                        <Cell $kind="num">{price}</Cell>
                        <Cell $kind="num">{pct}</Cell>
                        <Cell $kind="num">3</Cell>
                        <Cell $kind="num">55</Cell>
                      </SignalRow>
                    ))}
                  </SignalBody>
                </SignalTable>
                <ScrollTrack>
                  <span>▲</span>
                  <ScrollGap $grow={180} />
                  <ScrollThumb />
                  <ScrollGap $grow={132} />
                  <span>▼</span>
                </ScrollTrack>
              </ListBody>
            </ListPane>

            <RightPane>
              <Tabs>
                <Tab $active>即時走勢</Tab>
                <Tab>盤後K線圖</Tab>
              </Tabs>
              <Market>
                <Summary>
                  <SummaryBody>
                    <SummaryRow>
                      <SummaryKey $c="#ddd">期代</SummaryKey>
                      <SummaryValue $head>HBF1</SummaryValue>
                    </SummaryRow>
                    {SUMMARY.map(([k, v, c], i) => (
                      <SummaryRow key={i}>
                        <SummaryKey $c={c}>{k}</SummaryKey>
                        <SummaryValue>{v}</SummaryValue>
                      </SummaryRow>
                    ))}
                  </SummaryBody>
                </Summary>
                {RANKS.map((rank) => (
                  <RankTable key={rank.title}>
                    <RankHead $c={rank.color}>{rank.title}</RankHead>
                    <RankBody>
                      {rank.rows.split(',').map((row, i) => {
                        const [name, value] = row.split('|');
                        return (
                          <RankRow key={name} $first={i === 0} $selected={name === '2492 華新科'}>
                            <RankCell>{name}</RankCell>
                            <RankCell $c={changeColor(value)}>{value}</RankCell>
                          </RankRow>
                        );
                      })}
                    </RankBody>
                  </RankTable>
                ))}
                <SummaryMark />
              </Market>
              <Charts>
                <Panel>
                  <PanelHead>
                    <Quote $c="#eee">華新科</Quote>
                    <Quote $c="#10d010">206</Quote>
                    <Quote $c="#10d010" $gap={1}>▼1</Quote>
                    <Quote $c="#18c8e0">華新科期貨201904</Quote>
                    <Quote $c="#10d010">206.5</Quote>
                    <Quote $c="#10d010">▼0.5</Quote>
                  </PanelHead>
                  <StockChart />
                </Panel>
                <Panel>
                  <PanelHead>
                    <Quote $c="#eee">台指</Quote>
                    <Quote $c="#10d010">10,802</Quote>
                    <Quote $c="#10d010" $gap={12}>▼4</Quote>
                    <Quote $c="#18c8e0">加權</Quote>
                    <Quote $c="#10d010">10,805.3</Quote>
                    <Quote $c="#10d010">▼3.47</Quote>
                    <Spacer />
                    <Quote $c="#eee">期貨</Quote>
                    <Box $c="#ffd800" $w={25}>10802</Box>
                    <Box $c="#20e020" $w={14}>2</Box>
                    <Quote $c="#ddd" $gap={1}>&lt;5秒</Quote>
                    <Box $c="#fff" $w={17}>0</Box>
                  </PanelHead>
                  <IndexChart />
                </Panel>
                <ChartMark />
              </Charts>
            </RightPane>
          </Main>
          <BottomStrip><StripThumb /></BottomStrip>
        </Win>
      </Page>
    </>
  );
}
